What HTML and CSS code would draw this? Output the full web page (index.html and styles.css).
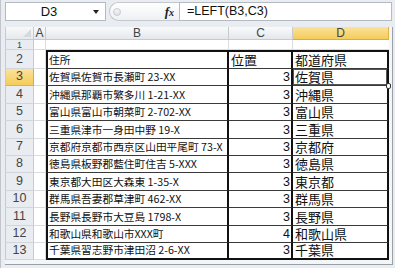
FILE: index.html
```html
<!DOCTYPE html>
<html lang="ja">
<head>
<meta charset="utf-8">
<link rel="stylesheet" href="styles.css">
</head>
<body>
<div class="frame">
  <div class="fbar">
    <div class="namebox"><span class="nb-text">D3</span><span class="nb-arrow"></span></div>
    <div class="fx-area"><span class="grip"></span><span class="fx">f<span class="fx-x">x</span></span></div>
    <div class="formula">=LEFT(B3,C3)</div>
  </div>
  <div class="sheet-wrap">
    <div class="sheet">
      <div class="corner"><span class="tri"></span></div>
      <div class="ch">A</div>
      <div class="ch">B</div>
      <div class="ch">C</div>
      <div class="ch sel">D</div>

      <div class="rh r1"><span>1</span></div>
      <div class="g"></div><div class="g"></div><div class="g"></div><div class="g last"></div>

      <div class="rh">2</div>
      <div class="g"></div>
      <div class="b top">住所</div>
      <div class="c top hdr">位置</div>
      <div class="d top">都道府県</div>

      <div class="rh sel">3</div><div class="g"></div>
      <div class="b">佐賀県佐賀市長瀬町 23-XX</div><div class="c">3</div><div class="d cur">佐賀県<span class="handle"></span></div>

      <div class="rh">4</div><div class="g"></div>
      <div class="b">沖縄県那覇市繁多川 1-21-XX</div><div class="c">3</div><div class="d">沖縄県</div>

      <div class="rh">5</div><div class="g"></div>
      <div class="b">富山県富山市朝菜町 2-702-XX</div><div class="c">3</div><div class="d">富山県</div>

      <div class="rh">6</div><div class="g"></div>
      <div class="b">三重県津市一身田中野 19-X</div><div class="c">3</div><div class="d">三重県</div>

      <div class="rh">7</div><div class="g"></div>
      <div class="b">京都府京都市西京区山田平尾町 73-X</div><div class="c">3</div><div class="d">京都府</div>

      <div class="rh">8</div><div class="g"></div>
      <div class="b">徳島県板野郡藍住町住吉 5-XXX</div><div class="c">3</div><div class="d">徳島県</div>

      <div class="rh">9</div><div class="g"></div>
      <div class="b">東京都大田区大森東 1-35-X</div><div class="c">3</div><div class="d">東京都</div>

      <div class="rh">10</div><div class="g"></div>
      <div class="b">群馬県吾妻郡草津町 462-XX</div><div class="c">3</div><div class="d">群馬県</div>

      <div class="rh">11</div><div class="g"></div>
      <div class="b">長野県長野市大豆島 1798-X</div><div class="c">3</div><div class="d">長野県</div>

      <div class="rh">12</div><div class="g"></div>
      <div class="b">和歌山県和歌山市XXX町</div><div class="c">4</div><div class="d">和歌山県</div>

      <div class="rh">13</div><div class="g"></div>
      <div class="b bottom">千葉県習志野市津田沼 2-6-XX</div><div class="c bottom">3</div><div class="d bottom">千葉県</div>
    </div>
  </div>
</div>
</body>
</html>
```

FILE: styles.css
```css
* { box-sizing: border-box; }
html, body { margin: 0; padding: 0; }
body {
  width: 395px;
  height: 268px;
  overflow: hidden;
  background: #e9ecf0;
  font-family: "Liberation Sans", Arial, sans-serif;
}
.frame {
  width: 395px;
  height: 268px;
  padding: 2px 0 0 4px;
  border-left: 1px solid #c2c6cc;
  background: #e9ecf0;
}
.fbar {
  display: flex;
  height: 19px;
  width: 387px;
}
.namebox {
  width: 101px;
  display: flex;
  align-items: center;
  background: #fff;
  border: 1px solid #b4bac2;
}
.nb-text {
  flex: 1;
  text-align: center;
  font-size: 13px;
  color: #111;
  padding-left: 2px;
}
.nb-arrow {
  width: 0; height: 0;
  margin: 0 6px 0 3px;
  border-left: 3px solid transparent;
  border-right: 3px solid transparent;
  border-top: 4px solid #222;
}
.fx-area {
  width: 70px;
  margin-left: 3px;
  display: flex;
  align-items: center;
  border: 1px solid #c3c8cf;
  border-right: none;
  border-radius: 10px 0 0 10px;
  background: linear-gradient(#ffffff, #eef0f3);
}
.grip {
  width: 8px; height: 8px;
  margin-left: 3px;
  border-radius: 50%;
  border: 1px solid #c6cad0;
  background: linear-gradient(#f4f5f7, #dfe2e6);
}
.fx {
  margin-left: auto;
  margin-right: 5px;
  font-family: "Liberation Serif", serif;
  font-style: italic;
  font-weight: bold;
  font-size: 13px;
  color: #222;
}
.fx-x { font-size: 10px; }
.formula {
  flex: 1;
  background: #fff;
  border: 1px solid #b4bac2;
  padding-left: 7px;
  font-size: 12.5px;
  line-height: 17px;
  color: #111;
}
.sheet-wrap {
  margin-top: 6px;
  width: 388px;
  height: 238px;
  border-right: 1px solid #9aa0a8;
  border-bottom: 1px solid #9aa0a8;
  background: #f4f5f7;
}
.sheet {
  display: grid;
  grid-template-columns: 29px 12px 183px 64px 96px;
  grid-template-rows: 13px 10px 19px repeat(11, 17.4px);
  width: 384px;
  background: #fff;
}
.corner {
  position: relative;
  background: linear-gradient(#f7f8f9, #e6e9ed);
  border-right: 1px solid #c5cad1;
  border-bottom: 1px solid #c5cad1;
  border-left: 1px solid #c5cad1;
}
.tri {
  position: absolute;
  right: 2px; bottom: 2px;
  width: 0; height: 0;
  border-left: 8px solid transparent;
  border-bottom: 8px solid #d6d9de;
}
.ch {
  background: linear-gradient(#f9fafb, #e4e7eb);
  border-right: 1px solid #c5cad1;
  border-bottom: 1px solid #c5cad1;
  font-size: 12px;
  line-height: 12px;
  color: #444;
  text-align: center;
}
.ch.sel {
  background: linear-gradient(#fbe29b, #f5cc5a);
  border-right-color: #e0b14a;
  border-bottom-color: #e5a834;
}
.rh {
  background: #e9ecf0;
  border-left: 1px solid #c5cad1;
  border-right: 1px solid #c5cad1;
  border-bottom: 1px solid #d2d6dc;
  font-size: 12.5px;
  color: #444;
  text-align: center;
  display: flex;
  align-items: flex-end;
  justify-content: center;
  padding-bottom: 2px;
  line-height: 13px;
}
.rh.r1 {
  overflow: hidden;
  align-items: flex-start;
  padding: 0;
}
.rh.r1 span { display: block; font-size: 9px; line-height: 8px; height: 8px; margin-top: 1px; overflow: hidden; }
.rh.sel {
  background: linear-gradient(#fbe29b, #f5cc5a);
  border-right-color: #e5a834;
  border-bottom-color: #e0b14a;
}
.g {
  border-right: 1px solid #dadcdf;
  border-bottom: 1px solid #dadcdf;
}
.g.last { border-right: none; }
.b, .c, .d {
  display: flex;
  align-items: flex-end;
  white-space: nowrap;
  overflow: visible;
  font-family: "Noto Sans CJK JP", "Noto Sans", sans-serif;
  color: #111;
  border-bottom: 1px solid #3a3a3a;
}
.b {
  border-left: 2px solid #111;
  border-right: 2px solid #111;
  font-size: 10.7px;
  line-height: 13px;
  padding: 0 0 2px 1px;
}
.c {
  justify-content: flex-end;
  border-right: 2px solid #111;
  font-family: "Liberation Sans", Arial, sans-serif;
  font-size: 12.5px;
  line-height: 14px;
  padding: 0 1px 1px 0;
}
.c.hdr {
  justify-content: flex-start;
  font-family: "Noto Sans CJK JP", sans-serif;
  font-size: 13px;
  padding-left: 2px;
}
.d {
  border-right: 2px solid #111;
  font-size: 13px;
  line-height: 14px;
  padding: 0 0 1px 2px;
}
.top { border-top: 2px solid #111; }
.bottom { border-bottom: 2px solid #111; }
.cur {
  position: relative;
  box-shadow: inset 0 0 0 1px #555;
}
.handle {
  position: absolute;
  right: -4px;
  bottom: -4px;
  width: 5px;
  height: 6px;
  border: 1px solid #333;
  border-radius: 2px;
  background: #fff;
}
```
